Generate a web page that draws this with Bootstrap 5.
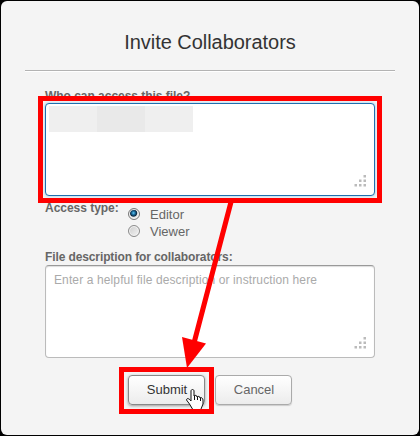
<!DOCTYPE html>
<html lang="en">
<head>
<meta charset="utf-8">
<title>Invite Collaborators</title>
<link href="https://cdn.jsdelivr.net/npm/bootstrap@5.3.0/dist/css/bootstrap.min.css" rel="stylesheet">
<style>
body{background:#000;font-family:"Liberation Sans",Arial,sans-serif;font-size:12px;line-height:16px;color:#666;width:420px;height:436px;overflow:hidden}
.dialog{width:418px;height:434px;margin:1px;border-radius:6px;background:#f4f4f4;padding:0 24px}
.dialog-title{height:69px;padding-top:29px;font-size:20px;line-height:24px;letter-spacing:-.04px;color:#333}
.rule{height:1px;background:#b3b3b3;box-shadow:0 1px #fff}
.form-body{padding:17px 20px 0}
.field-label{font-weight:700;height:15px;line-height:16px;white-space:nowrap;letter-spacing:-.03px}
.field-label.tight{height:16px;letter-spacing:-.11px}
.box{width:330px;height:93px;border:1px solid #bbb;border-top-color:#999;border-radius:4px;background:#fff;box-shadow:inset 0 1px 1px #ddd}
.box.active{border-color:#1f6fae;box-shadow:0 0 3px #8cc4e8}
.box textarea{width:100%;height:100%;resize:none;border:0;outline:0;background:none;padding:6px 8px;line-height:16px;color:#555}
.box textarea::placeholder{color:#aaa;opacity:1;letter-spacing:.12px}
.grip{right:8px;bottom:8px}
.mask-strip{left:3px;top:2px;width:144px;height:26px}
.mask-strip span{flex:1;background:#efefef}
.mask-strip span:nth-child(2){background:#e9e9e9}
.access{height:53px;padding-top:4px}
.access .field-label{width:83px}
.opts{padding-top:6px}
.opt{font-size:13px;line-height:17px;height:17px}
.opt input{appearance:none;width:12px;height:12px;border:1px solid #8b8b8b;border-radius:50%;background:linear-gradient(135deg,#ccc,#f4f4f4);box-shadow:inset 0 0 0 1px #f4f4f4;margin:-1px 10px 0 0}
.opt input:checked{border-color:#777;background:radial-gradient(circle at 45% 40%,#6cc8f0 0,#1f78ab 1.5px,#0b2942 3.2px,#e8e8e8 4.2px)}
.actions{padding:17px 0 0 83px;gap:10px}
.btn-plain{width:77px;height:30px;padding:0 0 0 1px;font-size:13px;line-height:28px;color:#666;border:1px solid #aaa;border-radius:4px;background:linear-gradient(#fff,#ececec);box-shadow:0 1px 1px #ccc}
.btn-plain.go{color:#333;border-color:#888;box-shadow:0 1px 3px #999}
.marks{left:0;top:0;pointer-events:none}
</style>
<script src="https://cdn.jsdelivr.net/npm/bootstrap@5.3.0/dist/js/bootstrap.bundle.min.js"></script>
</head>
<body class="position-relative">
<svg class="d-none"><defs><g id="dots" fill="#bbb"><path d="M9.5 0h2.5v2.500H9.5zM5 4.500h2.500V7H5zM9.500 4.500h2.500V7H9.500zM.5 9H3v2.500H.5zM5 9h2.500v2.500H5zM9.500 9h2.500v2.500H9.500z"/></g></defs></svg>
<main class="d-flex">
<form class="dialog">
<h1 class="dialog-title text-center fw-normal m-0">Invite Collaborators</h1>
<div class="rule"></div>
<div class="form-body">
<label class="field-label d-block" for="who">Who can access this file?</label>
<div class="box active position-relative">
<textarea id="who"></textarea>
<div class="mask-strip position-absolute d-flex"><span></span><span></span><span></span></div>
<svg class="grip position-absolute" width="12" height="12"><use href="#dots"/></svg>
</div>
<div class="access d-flex">
<div class="field-label">Access type:</div>
<div class="opts d-flex flex-column">
<label class="opt d-flex align-items-center"><input type="radio" name="role" checked>Editor</label>
<label class="opt d-flex align-items-center"><input type="radio" name="role">Viewer</label>
</div>
</div>
<label class="field-label tight d-block" for="desc">File description for collaborators:</label>
<div class="box position-relative">
<textarea id="desc" placeholder="Enter a helpful file description or instruction here"></textarea>
<svg class="grip position-absolute" width="12" height="12"><use href="#dots"/></svg>
</div>
<div class="actions d-flex">
<button type="button" class="btn btn-plain go">Submit</button>
<button type="button" class="btn btn-plain">Cancel</button>
</div>
</div>
</form>
</main>
<svg class="marks position-absolute" width="420" height="436">
<g fill="none" stroke="#f00" stroke-width="5"><path d="M40.500 98.500h339v102h-339zM121.500 369.500h90v42h-90zM231 202L194 343"/></g>
<path fill="#f00" d="M182 337l24 6.500L187 368z"/>
<path fill="#fff" stroke="#111" stroke-linejoin="round" d="M192.500 409l-3-5-3-4c0-2 2.500-2 4.500 1v-10c0-2 3-2 3 0v5c1-1 3-1 3 1 1-1 3-1 3 1 1-1 3 0 3 2v4l-2 5"/>
<path fill="none" stroke="#111" d="M194.500 396v4M197.500 397v3M200.500 398v3"/>
</svg>
</body>
</html>
